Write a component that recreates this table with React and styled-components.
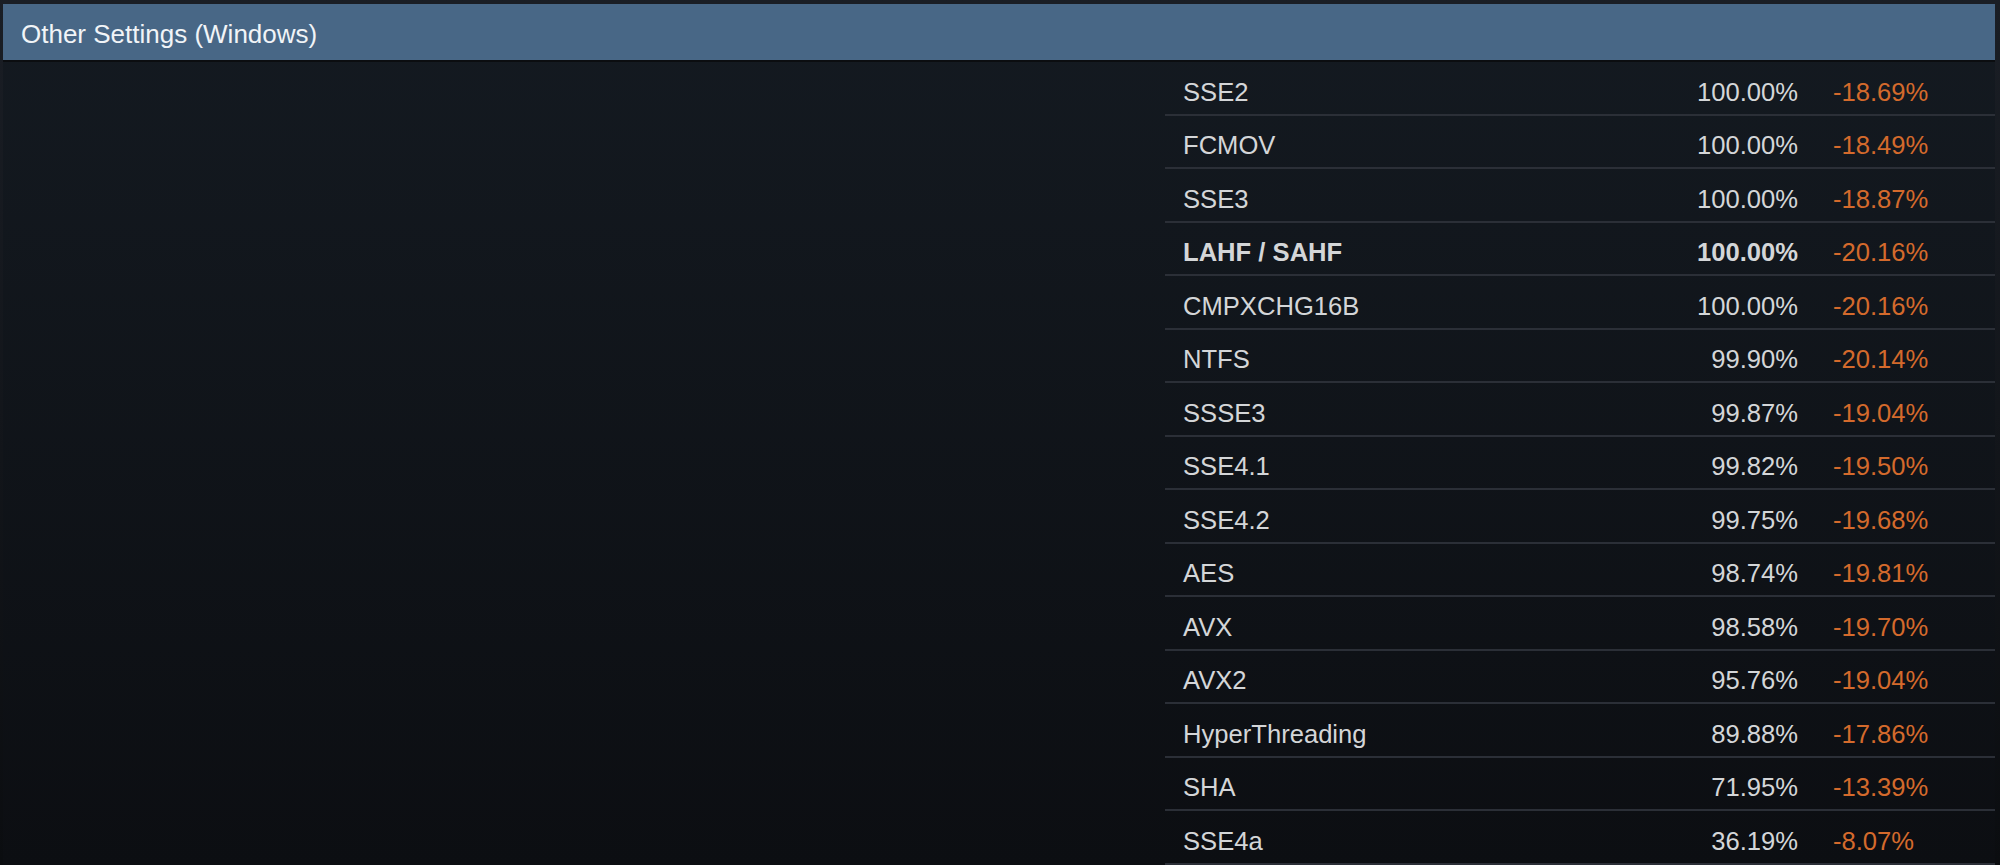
import React from 'react';
import styled, { createGlobalStyle } from 'styled-components';

const GlobalStyle = createGlobalStyle`
  html, body {
    margin: 0;
    padding: 0;
    background: linear-gradient(to bottom, #1a1e25 0%, #0b0d10 100%);
    font-family: "Liberation Sans", Arial, sans-serif;
  }
`;

const Page = styled.div`
  padding: 4px 5px 0 3px;
  height: 865px;
  box-sizing: border-box;
  overflow: hidden;
`;

const Panel = styled.section`
  display: flex;
  flex-direction: column;
  height: 100%;
  background: linear-gradient(to bottom, #141a21 0%, #0c0e12 100%);
`;

const Header = styled.div`
  height: 58px;
  flex-shrink: 0;
  box-sizing: border-box;
  display: flex;
  align-items: center;
  padding: 5px 18px 0;
  background: #486786;
  border-bottom: 2px solid #0b0d10;
  color: #f1f4f7;
  font-size: 26px;
`;

const Body = styled.div`
  display: grid;
  grid-template-columns: 1fr 830px;
  flex: 1;
`;

const Table = styled.div`
  grid-column: 2;
  display: flex;
  flex-direction: column;
`;

const Row = styled.div`
  display: grid;
  grid-template-columns: 1fr auto 162px;
  column-gap: 35px;
  align-items: center;
  height: 53.5px;
  flex-shrink: 0;
  box-sizing: border-box;
  padding: 9px 0 0 18px;
  border-bottom: 2px solid #2b2f37;
  font-size: 25.6px;
  color: #d4d6d8;
  font-weight: ${(p) => (p.$bold ? 700 : 400)};
  white-space: nowrap;
`;

const Pct = styled.span`
  text-align: right;
`;

const Change = styled.span`
  color: #d46a2c;
  font-weight: 400;
`;

const rows = [
  ['SSE2', '100.00%', '-18.69%'],
  ['FCMOV', '100.00%', '-18.49%'],
  ['SSE3', '100.00%', '-18.87%'],
  ['LAHF / SAHF', '100.00%', '-20.16%', true],
  ['CMPXCHG16B', '100.00%', '-20.16%'],
  ['NTFS', '99.90%', '-20.14%'],
  ['SSSE3', '99.87%', '-19.04%'],
  ['SSE4.1', '99.82%', '-19.50%'],
  ['SSE4.2', '99.75%', '-19.68%'],
  ['AES', '98.74%', '-19.81%'],
  ['AVX', '98.58%', '-19.70%'],
  ['AVX2', '95.76%', '-19.04%'],
  ['HyperThreading', '89.88%', '-17.86%'],
  ['SHA', '71.95%', '-13.39%'],
  ['SSE4a', '36.19%', '-8.07%'],
];

export default function App() {
  return (
    <>
      <GlobalStyle />
      <Page>
        <Panel>
          <Header>Other Settings (Windows)</Header>
          <Body>
            <Table>
              {rows.map(([name, pct, change, bold]) => (
                <Row key={name} $bold={bold}>
                  <span>{name}</span>
                  <Pct>{pct}</Pct>
                  <Change>{change}</Change>
                </Row>
              ))}
            </Table>
          </Body>
        </Panel>
      </Page>
    </>
  );
}
